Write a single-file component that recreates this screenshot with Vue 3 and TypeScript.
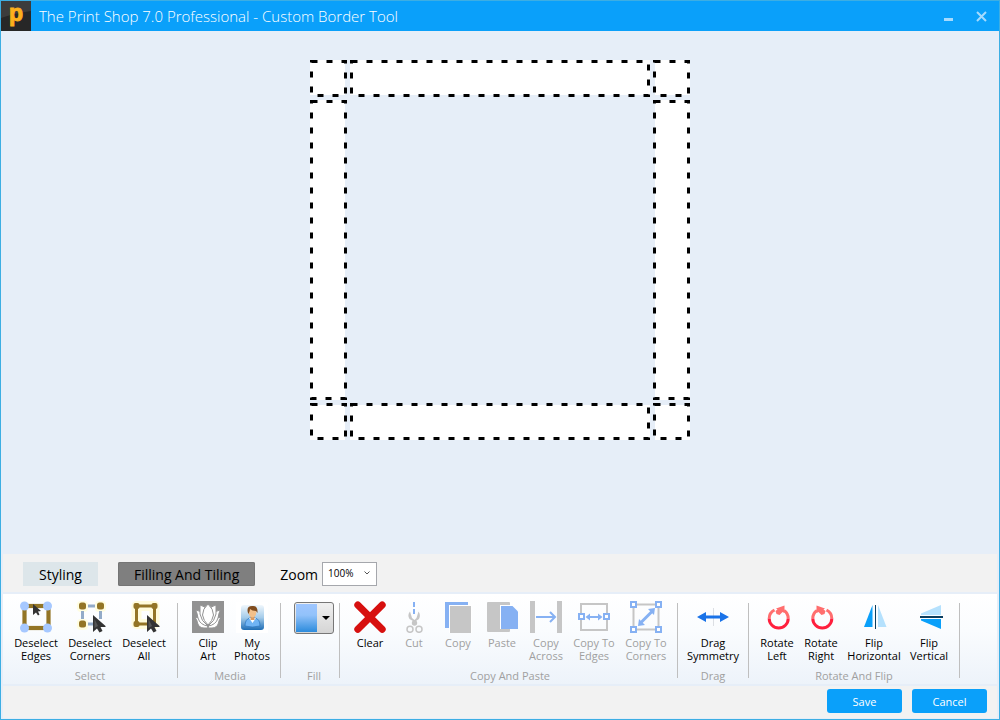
<script setup lang="ts">
import { ref } from 'vue'

interface Tool {
  id: string
  lines: string[]
  size?: string
  disabled?: boolean
}
interface Group {
  name: string
  tools: Tool[]
}

const tabs = ['Styling', 'Filling And Tiling']
const activeTab = ref('Filling And Tiling')
const zoom = ref('100%')

const groups: Group[] = [
  {
    name: 'Select',
    tools: [
      { id: 'edges', lines: ['Deselect', 'Edges'], size: 'mid' },
      { id: 'corners', lines: ['Deselect', 'Corners'], size: 'mid' },
      { id: 'all', lines: ['Deselect', 'All'], size: 'mid' },
    ],
  },
  {
    name: 'Media',
    tools: [
      { id: 'clip', lines: ['Clip', 'Art'] },
      { id: 'photos', lines: ['My', 'Photos'] },
    ],
  },
  { name: 'Fill', tools: [] },
  {
    name: 'Copy And Paste',
    tools: [
      { id: 'clear', lines: ['Clear'] },
      { id: 'cut', lines: ['Cut'], disabled: true },
      { id: 'copy', lines: ['Copy'], disabled: true },
      { id: 'paste', lines: ['Paste'], disabled: true },
      { id: 'across', lines: ['Copy', 'Across'], disabled: true },
      { id: 'toedges', lines: ['Copy To', 'Edges'], size: 'snug', disabled: true },
      { id: 'tocorners', lines: ['Copy To', 'Corners'], size: 'snug', disabled: true },
    ],
  },
  { name: 'Drag', tools: [{ id: 'drag', lines: ['Drag', 'Symmetry'], size: 'wide' }] },
  {
    name: 'Rotate And Flip',
    tools: [
      { id: 'rotleft', lines: ['Rotate', 'Left'] },
      { id: 'rotright', lines: ['Rotate', 'Right'] },
      { id: 'fliph', lines: ['Flip', 'Horizontal'], size: 'wider' },
      { id: 'flipv', lines: ['Flip', 'Vertical'], size: 'small' },
    ],
  },
]

const pieces = [
  { x: 0, y: 0, w: 37, h: 37, fx: 0, fy: 0, fw: 35, fh: 35 },
  { x: 40, y: 0, w: 300, h: 37, fx: 40, fy: 0, fw: 300, fh: 35 },
  { x: 343, y: 0, w: 37, h: 37, fx: 345, fy: 0, fw: 35, fh: 35 },
  { x: 0, y: 40, w: 37, h: 300, fx: 0, fy: 40, fw: 35, fh: 300 },
  { x: 343, y: 40, w: 37, h: 300, fx: 345, fy: 40, fw: 35, fh: 300 },
  { x: 0, y: 343, w: 37, h: 37, fx: 0, fy: 345, fw: 35, fh: 35 },
  { x: 40, y: 343, w: 300, h: 37, fx: 40, fy: 345, fw: 300, fh: 35 },
  { x: 343, y: 343, w: 37, h: 37, fx: 345, fy: 345, fw: 35, fh: 35 },
]
</script>

<template>
  <div class="window">
    <header class="titlebar">
      <svg class="logo" viewBox="0 0 30 30" aria-hidden="true">
        <rect width="30" height="30" fill="#272727" />
        <path d="M0 0H30V10Q14 12 0 17Z" fill="#3c3c3c" />
        <text x="15" y="20" text-anchor="middle" class="logo-letter">p</text>
      </svg>
      <h1>The Print Shop 7.0 Professional - Custom Border Tool</h1>
      <button class="sys" aria-label="Minimize">
        <svg viewBox="0 0 11 11"><path d="M1 8.5H10" stroke="#a5dafd" stroke-width="3" /></svg>
      </button>
      <button class="sys" aria-label="Close">
        <svg viewBox="0 0 11 11"><path d="M1 1L10 10M10 1L1 10" stroke="#a5dafd" stroke-width="2" /></svg>
      </button>
    </header>

    <main class="canvas">
      <svg class="border-preview" viewBox="0 0 380 380" role="img" aria-label="Border preview">
        <g v-for="(p, i) in pieces" :key="i">
          <rect :x="p.fx" :y="p.fy" :width="p.fw" :height="p.fh" fill="#fff" />
          <rect :x="p.x + 1.5" :y="p.y + 1.5" :width="p.w - 3" :height="p.h - 3" fill="none" stroke="#000" stroke-width="3" stroke-dasharray="6 9" />
        </g>
      </svg>
    </main>

    <nav class="options">
      <button v-for="t in tabs" :key="t" class="tab" :class="{ active: t === activeTab }" @click="activeTab = t">{{ t }}</button>
      <label for="zoom">Zoom</label>
      <span class="select-wrap">
        <select id="zoom" v-model="zoom">
          <option>50%</option>
          <option>100%</option>
          <option>200%</option>
        </select>
        <svg class="chevron" viewBox="0 0 6 4"><path d="M.5 .5L3 3L5.500 .5" fill="none" stroke="#555" /></svg>
      </span>
    </nav>

    <section class="ribbon">
      <div v-for="g in groups" :key="g.name" class="group">
        <div class="tools">
          <button v-if="g.name === 'Fill'" class="fill" aria-label="Fill">
            <span class="swatch"></span>
            <svg viewBox="0 0 8 4"><path d="M0 0H8L4 4Z" /></svg>
          </button>
          <button v-for="t in g.tools" :key="t.id" class="tool" :class="t.size" :disabled="t.disabled">
            <svg class="icon" viewBox="0 0 32 32" aria-hidden="true">
              <template v-if="t.id === 'edges'">
                <rect x="4.500" y="5" width="24" height="22" fill="none" stroke="#937526" stroke-width="4.200" />
                <g fill="#a6c8ff"><circle cx="4.500" cy="5" r="4.500" /><circle cx="27.500" cy="5" r="4.500" /><circle cx="4.500" cy="27" r="4.500" /><circle cx="27.500" cy="27" r="4.500" /></g>
                <path d="M13 3V14L16 11.500L18 14.500L19.500 13.500L18 10.500L21 10Z" fill="#333" />
              </template>
              <template v-else-if="t.id === 'corners'">
                <g fill="#fffde0"><rect x="3" y="0" width="11" height="11" rx="4" /><rect x="21" y="0" width="11" height="11" rx="4" /><rect x="3" y="18" width="11" height="11" rx="4" /></g>
                <path d="M14 5H21M8.500 10V18M26.500 10V18M14 23H21" stroke="#93abc8" stroke-width="3" />
                <g fill="#937526"><rect x="5" y="1.500" width="7" height="7" rx="2.500" /><rect x="23" y="1.500" width="7" height="7" rx="2.500" /><rect x="5" y="19.500" width="7" height="7" rx="2.500" /></g>
                <path d="M19 14V31L23 27.500L25.500 31.500L28.500 30L26.500 26H31.500V25Z" fill="#333" />
                <path d="M20.500 18V27L24 25Z" fill="#555" />
              </template>
              <template v-else-if="t.id === 'all'">
                <rect x="8.500" y="5" width="18" height="18" fill="none" stroke="#fffcdc" stroke-width="10" stroke-linejoin="round" />
                <rect x="8.500" y="5" width="18" height="18" fill="none" stroke="#937526" stroke-width="3" />
                <g fill="#937526"><rect x="5.500" y="2" width="6" height="6" rx="2" /><rect x="23.500" y="2" width="6" height="6" rx="2" /><rect x="5.500" y="20" width="6" height="6" rx="2" /></g>
                <path d="M19 14V31L23 27.500L25.500 31.500L28.500 30L26.500 26H31.500V25Z" fill="#333" />
                <path d="M20.500 18V27L24 25Z" fill="#555" />
              </template>
              <template v-else-if="t.id === 'clip'">
                <rect width="32" height="32" fill="#929292" />
                <g fill="#fff" stroke="#929292" stroke-width="1">
                  <path d="M3 17Q9 15 15 22L16 27H12Q7 27 5.500 22Q5 18 3 17ZM29 17Q23 15 17 22L16 27H20Q25 27 26.500 22Q27 18 29 17Z" />
                  <path d="M3.500 9Q9 9 13 15L16 25Q8 24 6 17Q5 11 3.500 9ZM28.500 9Q23 9 19 15L16 25Q24 24 26 17Q27 11 28.500 9Z" />
                  <path d="M8 4Q13 5 15 9L16 25Q9 20 8 13ZM24 4Q19 5 17 9L16 25Q23 20 24 13Z" />
                  <path d="M16 3Q21.500 8 21.500 14Q20.500 20 16 24Q11.500 20 10.500 14Q10.500 8 16 3Z" />
                </g>
              </template>
              <template v-else-if="t.id === 'photos'">
                <defs><linearGradient id="photo-bg" x2="0" y2="1"><stop stop-color="#f0f7fc" /><stop offset=".5" stop-color="#a5ccea" /><stop offset="1" stop-color="#1e6db5" /></linearGradient></defs>
                <rect x="0" y="1" width="32" height="31" fill="#fff" />
                <rect x="5" y="4" width="23" height="25" rx="3" fill="url(#photo-bg)" />
                <path d="M9 25Q9 18 14 17H19Q24 18 24 25Q16 27 9 25Z" fill="#70b4f4" stroke="#2672bf" stroke-width=".7" />
                <path d="M13 17L16.500 22L20 17Z" fill="#fff" />
                <rect x="14.500" y="14" width="4" height="5" fill="#d99a60" />
                <ellipse cx="16.500" cy="11.500" rx="3.800" ry="5" fill="#f2c08a" />
                <path d="M12 12Q10 5 16 5Q22 4 21.500 12L20 10Q16 10 14 8Q14 10 12.500 13Z" fill="#804c1e" />
              </template>
              <template v-else-if="t.id === 'clear'">
                <path d="M3.800 4L28.200 28.200M28.200 4L3.800 28.200" stroke="#d7100f" stroke-width="7" stroke-linecap="round" />
              </template>
              <template v-else-if="t.id === 'cut'">
                <path d="M16 1V15" stroke="#86b1f3" stroke-width="2" stroke-dasharray="5 2" />
                <path d="M12 10.500Q9 14 11.500 18L15 20H18L21 18Q23 14 20.500 10.500L18.500 17L16.500 19L14 17Z" fill="#c6c6c6" />
                <circle cx="16.500" cy="22" r="2.700" fill="#c6c6c6" />
                <g fill="none" stroke="#c6c6c6" stroke-width="1.500"><circle cx="12" cy="28.300" r="3" /><circle cx="21" cy="28.300" r="3" /></g>
              </template>
              <template v-else-if="t.id === 'copy'">
                <rect x="3" y="1" width="23" height="26" fill="#86b1f3" />
                <rect x="7" y="4" width="23" height="28" fill="#fff" />
                <rect x="8" y="5" width="21" height="27" fill="#c6c6c6" />
              </template>
              <template v-else-if="t.id === 'paste'">
                <rect x="1" y="1" width="23" height="30" rx="1" fill="#c6c6c6" />
                <path d="M14 4H28V28H14Z" fill="#fff" />
                <path d="M15 5H26.500L32 10.500V28H15Z" fill="#86b1f3" />
              </template>
              <template v-else-if="t.id === 'across'">
                <path d="M2.500 0V32M29.500 0V32" stroke="#c6c6c6" stroke-width="5" />
                <path d="M6 16H25M20 11L25 16L20 21" fill="none" stroke="#86b1f3" stroke-width="2" />
              </template>
              <template v-else-if="t.id === 'toedges'">
                <rect x="3" y="3" width="26" height="26" fill="none" stroke="#c6c6c6" stroke-width="2" />
                <g fill="#fff" stroke="#86b1f3" stroke-width="2"><rect x="1" y="13" width="5" height="5" /><rect x="26" y="13" width="5" height="5" /></g>
                <path d="M10 16H22" stroke="#86b1f3" stroke-width="2" /><path d="M7.500 16L12 12.500V19.500ZM24.500 16L20 12.500V19.500Z" fill="#86b1f3" />
              </template>
              <template v-else-if="t.id === 'tocorners'">
                <rect x="3.500" y="3.500" width="25" height="25" fill="none" stroke="#c6c6c6" stroke-width="2" />
                <g fill="#fff" stroke="#86b1f3" stroke-width="2"><rect x="1" y="1" width="5" height="5" /><rect x="26" y="1" width="5" height="5" /><rect x="1" y="26" width="5" height="5" /><rect x="26" y="26" width="5" height="5" /></g>
                <path d="M11 21.500L22 10.500" stroke="#86b1f3" stroke-width="3" /><path d="M25 7L24 14L18 8ZM8 25L9 18L15 24Z" fill="#86b1f3" />
              </template>
              <template v-else-if="t.id === 'drag'">
                <path d="M16.500 7V25" stroke="#dcdfe4" />
                <path d="M0 16L9 11V14.500H23V11L32 16L23 21V17.500H9V21Z" fill="#1a73e8" />
              </template>
              <template v-else-if="t.id === 'rotleft' || t.id === 'rotright'">
                <g :transform="t.id === 'rotright' ? 'translate(34 0) scale(-1 1)' : 'translate(1 0)'">
                  <g fill="none" stroke-width="3">
                    <path d="M7.200 17.500A9.500 9.500 0 0 1 12.500 9M22 9.500A9.500 9.500 0 0 1 26.200 17.500" stroke="#ff6e6e" />
                    <path d="M7.200 17.500A9.500 9.500 0 0 0 26.200 17.500" stroke="#ff1f3d" />
                  </g>
                  <path d="M14 7.500L22.500 4.500V12L20.500 11L17.500 14L14.500 13L13.500 10L15.500 8.500Z" fill="#ff6e6e" />
                </g>
              </template>
              <template v-else-if="t.id === 'fliph'">
                <path d="M14.500 4V26H6Z" fill="#0aa0fa" /><path d="M20 4V26H28.500Z" fill="#b5e1fd" /><path d="M17.500 4V28" stroke="#0a3d5f" />
              </template>
              <template v-else-if="t.id === 'flipv'">
                <path d="M28 4V14H8V12.500Z" fill="#b5e1fd" /><path d="M28 28V18H8V19.500Z" fill="#0aa0fa" /><path d="M7 16H30" stroke="#0a3d5f" stroke-width="2" />
              </template>
            </svg>
            <span v-for="l in t.lines" :key="l" class="line">{{ l }}</span>
          </button>
        </div>
        <div class="group-name">{{ g.name }}</div>
      </div>
    </section>

    <footer class="footer">
      <button class="action">Save</button>
      <button class="action">Cancel</button>
    </footer>
  </div>
</template>

<style>
body {
  margin: 0;
}
</style>

<style scoped>
.window {
  box-sizing: border-box;
  min-height: 100vh;
  display: flex;
  flex-direction: column;
  border: 1px solid #3daee3;
  background: #e6eef8;
  font-family: "Open Sans", "Noto Sans", sans-serif;
  font-size: 11px;
  color: #000;
}
button {
  font: inherit;
  color: inherit;
  padding: 0;
  border: 0;
  background: none;
}
.titlebar {
  display: flex;
  align-items: center;
  height: 30px;
  padding-right: 12px;
  background: #0aa0fa;
  color: #fff;
}
.logo {
  width: 30px;
  height: 30px;
  overflow: visible;
}
.logo-letter {
  font: 700 23px "Liberation Sans", sans-serif;
  fill: #fcb01c;
  stroke: #fcb01c;
  stroke-width: 1px;
}
h1 {
  flex: 1;
  margin: 0 0 0 8px;
  font-size: 15px;
  font-weight: 300;
}
.sys {
  width: 11px;
  height: 11px;
  margin-left: 22px;
}
.sys svg {
  display: block;
}
.canvas {
  flex: 1;
  display: flex;
  justify-content: center;
  align-items: flex-start;
  padding-top: 29px;
}
.border-preview {
  width: 380px;
  height: 380px;
}
.options {
  display: flex;
  align-items: center;
  height: 38px;
  margin: 0 2px;
  padding: 2px 20px 0;
  box-sizing: border-box;
  background: #f2f2f2;
  font-size: 14px;
}
.tab {
  height: 24px;
  padding: 0 16px;
  margin-right: 20px;
  background: #dde6ea;
}
.tab.active {
  background: #7f7f7f;
  box-shadow: inset 0 0 0 1px #757575;
  border-radius: 2px;
  margin-right: 25px;
}
.select-wrap {
  position: relative;
  margin-left: 4px;
}
select {
  display: block;
  appearance: none;
  width: 55px;
  height: 24px;
  padding: 0 0 2px 5px;
  border: 1px solid #a5a7ac;
  border-radius: 0;
  background: #fff;
  color: #000;
  font: 10px "Open Sans", sans-serif;
}
.chevron {
  position: absolute;
  right: 7px;
  top: 9px;
  width: 6px;
  height: 4px;
}
.ribbon {
  display: flex;
  height: 90px;
  box-sizing: border-box;
  margin: 2px 2px 0;
  padding: 7px 0 0;
  background: linear-gradient(#fff, #fafcfe 40%, #edf3fa);
}
.group {
  position: relative;
  display: flex;
  flex-direction: column;
  justify-content: space-between;
  padding: 0 7px 0 6px;
}
.group::after {
  content: "";
  position: absolute;
  top: 2px;
  right: 0;
  bottom: 6px;
  width: 1px;
  background: #bfbfbf;
}
.group:nth-child(2) {
  padding-left: 8px;
}
.group:nth-child(3) {
  padding: 0 6px 0 13px;
}
.group:nth-child(4) {
  padding: 0 6px 0 8px;
}
.tools {
  display: flex;
  align-items: flex-start;
}
.tool {
  display: flex;
  flex-direction: column;
  align-items: center;
  width: 44px;
  white-space: nowrap;
}
.tool.small {
  width: 48px;
}
.tool.snug {
  width: 52px;
}
.tool.mid {
  width: 54px;
}
.tool.wide {
  width: 58px;
}
.tool.wider {
  width: 62px;
}
.tool:disabled {
  color: #a0a0a0;
}
.icon {
  width: 32px;
  height: 32px;
  margin-bottom: 3px;
}
.line {
  line-height: 13px;
}
.group-name {
  line-height: 15px;
  padding-bottom: 1px;
  text-align: center;
  color: #a0a0a0;
}
.fill {
  display: flex;
  align-items: center;
  box-sizing: border-box;
  width: 40px;
  height: 32px;
  margin-top: 1px;
  padding: 1px;
  border: 1px solid #777;
  border-radius: 3px;
  background: linear-gradient(#f0f0f0, #d5d5d5);
}
.fill .swatch {
  width: 21px;
  height: 28px;
  background: linear-gradient(#9fc6ff, #92c2fa 40%, #2c8bdc);
}
.fill svg {
  width: 8px;
  height: 4px;
  margin-left: 5px;
}
.footer {
  display: flex;
  justify-content: flex-end;
  gap: 10px;
  margin: 2px 2px 1px;
  padding: 3px 10px 5px;
  background: #f2f2f2;
}
.action {
  width: 75px;
  height: 24px;
  border-radius: 3px;
  background: #0aa0fa;
  color: #fff;
}
</style>
